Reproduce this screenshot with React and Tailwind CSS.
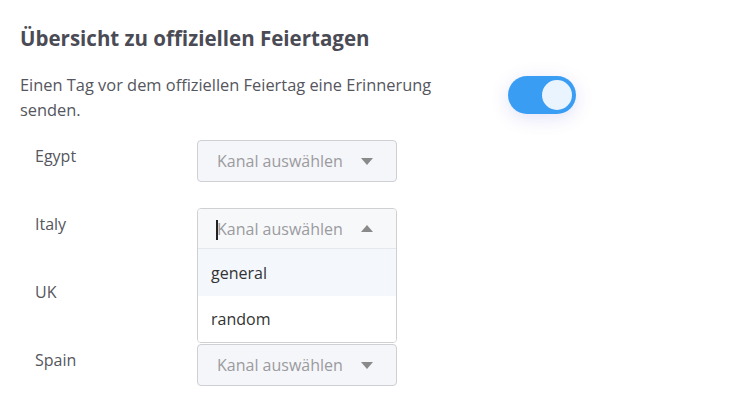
import { useState } from "react";

const countries = ["Egypt", "Italy", "UK", "Spain"];

function Caret({ up }) {
  return (
    <svg width="12" height="7" viewBox="0 0 12 7" className="shrink-0">
      {up ? <path d="M0 7 L6 0 L12 7 Z" fill="#8a8a8a" /> : <path d="M0 0 L6 7 L12 0 Z" fill="#8a8a8a" />}
    </svg>
  );
}

function ChannelSelect({ open }) {
  if (!open) {
    return (
      <div className="h-[42px] w-[200px] rounded border border-[#cfd0d4] bg-[#f5f6f9] flex items-center justify-between pl-[19px] pr-[23px]">
        <span className="text-[16px] text-[#9b9b9f]">Kanal auswählen</span>
        <Caret />
      </div>
    );
  }
  return (
    <div className="relative h-[42px] w-[200px]">
      <div className="absolute left-0 top-0 z-10 w-[200px] rounded border border-[#cfd0d4] bg-white overflow-hidden">
        <div className="h-[40px] bg-[#f7f8fa] border-b border-[#e6e7ea] flex items-center justify-between pl-[19px] pr-[23px]">
          <span className="relative text-[16px] text-[#9b9b9f]">
            <span className="absolute -left-[1px] top-[3px] h-[20px] w-[2px] bg-[#222]" />
            Kanal auswählen
          </span>
          <Caret up />
        </div>
        <div className="h-[47px] bg-[#f4f8fd] flex items-center pl-[13px] text-[16px] text-[#333]">general</div>
        <div className="h-[46px] bg-white flex items-center pl-[13px] text-[16px] text-[#333]">random</div>
      </div>
    </div>
  );
}

export default function App() {
  const [on, setOn] = useState(true);

  return (
    <div className="min-h-screen bg-white pl-5 pt-[24px] font-['Open_Sans','Lato',sans-serif]">
      <h2 className="text-[20.5px] leading-[28px] font-bold text-[#4a4b55]">Übersicht zu offiziellen Feiertagen</h2>

      <div className="mt-[20px] flex items-start">
        <p className="w-[440px] text-[16.4px] leading-[25px] text-[#55565e]">
          Einen Tag vor dem offiziellen Feiertag eine Erinnerung senden.
        </p>
        <button
          type="button"
          onClick={() => setOn((s) => !s)}
          className="ml-[48px] mt-[4px] h-[38px] w-[68px] rounded-full bg-[#3a9df4] shadow-[0_4px_18px_rgba(90,90,220,0.18)] flex items-center px-[4px] justify-end"
        >
          <span className="h-[30px] w-[30px] rounded-full bg-[#eaf4fe]" />
        </button>
      </div>

      <div className="mt-[18px] flex flex-col gap-[26px]">
        {countries.map((c) => (
          <div key={c} className="flex items-start">
            <span className="w-[177px] pl-[15px] pt-[4px] text-[16px] text-[#55565e]">{c}</span>
            {c !== "UK" && <ChannelSelect open={c === "Italy"} />}
            {c === "UK" && <div className="h-[42px]" />}
          </div>
        ))}
      </div>
    </div>
  );
}
